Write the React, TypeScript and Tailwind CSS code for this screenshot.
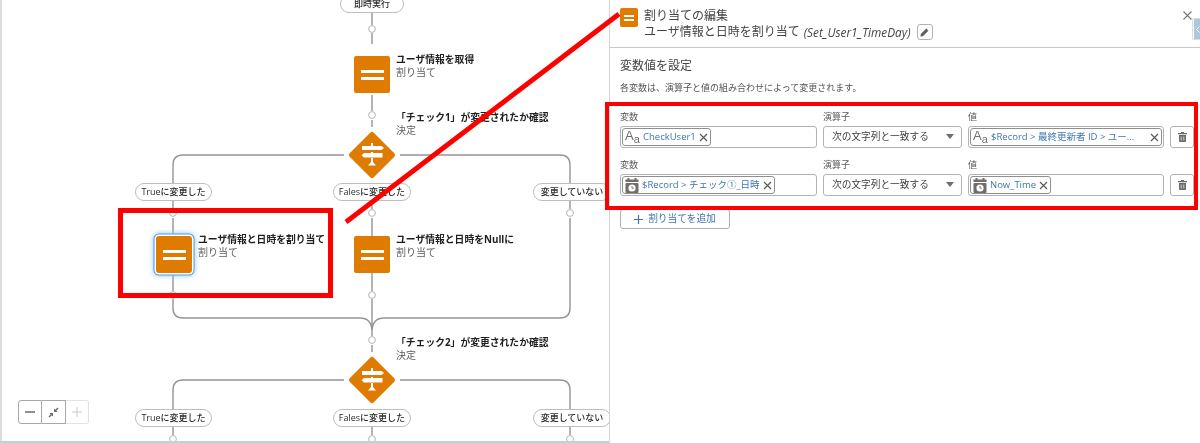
import React from "react";

const FONT = "font-['Open_Sans','Noto_Sans_CJK_JP',sans-serif]";

function Bars({ small }: { small?: boolean }) {
  return (
    <span className={small ? "flex flex-col gap-[2px]" : "flex flex-col gap-[4px]"}>
      <span className={small ? "block w-[10px] h-[2px] bg-white" : "block w-[23px] h-[3px] bg-white"} />
      <span className={small ? "block w-[10px] h-[2px] bg-white" : "block w-[23px] h-[3px] bg-white"} />
    </span>
  );
}

function Diamond({ cy }: { cy: number }) {
  return (
    <g transform={`translate(372 ${cy})`}>
      <rect x="-17" y="-17" width="34" height="34" rx="2.5" fill="#de7b00" transform="rotate(45)" />
      <path
        d="M-1 -12h2v3h8.5l2.5 2-2.5 2H-10v-4H-1zM-1 -2v-1h2v1h9.5v4.5H-8L-10.5 0.2-8-2zM-1 3h2v4l3 3.500h-8l3-3.500z"
        fill="#fff"
      />
    </g>
  );
}

function Connectors() {
  const circles: [number, number][] = [
    [372, 29], [372, 115], [173, 213], [372, 213], [570, 213],
    [173, 295], [372, 295], [372, 340], [173, 439], [372, 439], [570, 439],
  ];
  return (
    <svg className="absolute left-0 top-0" width="609" height="443" viewBox="0 0 609 443" fill="none">
      <g stroke="#959595" strokeWidth="1.4">
        <path d="M372 13V25M372 33V44M372 95V111M372 120V127" />
        <path d="M344 155H183Q173 155 173 165V183M400 155H560Q570 155 570 165V183" />
        <path d="M173 201V209M372 201V209M570 201V209M173 218V234M372 218V236M570 218V308Q570 318 560 318H384Q373 318 372 330" />
        <path d="M173 275V291M372 273V291M173 299V308Q173 318 183 318H360Q371 318 372 330M372 299V336M372 345V352" />
        <path d="M344 380H183Q173 380 173 390V409M400 380H560Q570 380 570 390V409" />
        <path d="M173 427V435M372 427V435M570 427V435" />
      </g>
      <g fill="#fff" stroke="#b5b5b5" strokeWidth="1">
        {circles.map(([x, y]) => (
          <circle key={`${x}-${y}`} cx={x} cy={y} r="3.400" />
        ))}
      </g>
      <Diamond cy={155} />
      <Diamond cy={380} />
    </svg>
  );
}

function Pill({ className, children }: { className: string; children: React.ReactNode }) {
  return (
    <div
      className={`absolute flex items-center justify-center h-[18px] rounded-full border border-[#bdbdbd] bg-white text-[9px] font-medium text-[#2b2b2b] whitespace-nowrap ${className}`}
    >
      {children}
    </div>
  );
}

function NodeLabel({ className, title, sub }: { className: string; title: string; sub: string }) {
  return (
    <div className={`absolute whitespace-nowrap ${className}`}>
      <div className="text-[9.800px] leading-[13px] font-bold text-[#1f1f1f]">{title}</div>
      <div className="text-[10px] leading-[13px] text-[#5c5c5c]">{sub}</div>
    </div>
  );
}

function AaIcon() {
  return (
    <span className="flex items-end w-[15px] h-[16px] text-[#706e6b] font-['Liberation_Sans',sans-serif] leading-none shrink-0">
      <span className="text-[13px] -translate-y-[3px]">A</span>
      <span className="text-[11px]">a</span>
    </span>
  );
}

function CalIcon() {
  return (
    <svg width="14" height="15" viewBox="0 0 14 15" className="shrink-0">
      <rect x="2.500" y="0" width="2" height="3" fill="#706e6b" />
      <rect x="9.500" y="0" width="2" height="3" fill="#706e6b" />
      <rect x="0.500" y="1.500" width="13" height="2.500" fill="#706e6b" />
      <rect x="0.500" y="5" width="13" height="10" rx="1" fill="#706e6b" />
      <circle cx="7" cy="10" r="3.600" fill="#fff" />
      <path d="M7 8v2.200h1.800" stroke="#706e6b" strokeWidth="0.9" fill="none" />
    </svg>
  );
}

function XIcon() {
  return (
    <svg width="9" height="9" viewBox="0 0 9 9" className="shrink-0">
      <path d="M1 1l7 7M8 1L1 8" stroke="#5a5a5a" strokeWidth="1.200" />
    </svg>
  );
}

function Chip({ icon, text, textClass = "" }: { icon: React.ReactNode; text: string; textClass?: string }) {
  return (
    <div className="flex items-center h-[18px] pl-[2px] pr-[2px] gap-[3px] rounded-[3px] border border-[#8f8f8f] bg-white">
      {icon}
      <span className={`text-[9.500px] text-[#3f76ad] whitespace-nowrap ${textClass}`}>{text}</span>
      <XIcon />
    </div>
  );
}

function Field({ label, children }: { label: string; children: React.ReactNode }) {
  return (
    <div>
      <div className="h-[15px] text-[9px] leading-[12px] text-[#5a5a5a]">{label}</div>
      <div className="h-[22px] flex items-center px-[1px] rounded-[3px] border border-[#b3b3b3] bg-white">{children}</div>
    </div>
  );
}

function SelectField() {
  return (
    <Field label="演算子">
      <div className="flex flex-1 items-center justify-between pl-[7px] pr-[6px]">
        <span className="text-[9.700px] text-[#3e3e3c] whitespace-nowrap">次の文字列と一致する</span>
        <svg width="8" height="5" viewBox="0 0 8 5"><path d="M0 0h8L4 5z" fill="#706e6b" /></svg>
      </div>
    </Field>
  );
}

function TrashBtn() {
  return (
    <div className="pt-[15px]">
      <div className="h-[22px] flex items-center justify-center rounded-[3px] border border-[#b3b3b3] bg-white">
        <svg width="9" height="10" viewBox="0 0 9 10">
          <path d="M3 0h3v1h3v1.200H0V1h3zM1 3h7v6.200a.8.8 0 0 1-.8.8H1.800a.8.8 0 0 1-.8-.8z" fill="#6b6b6b" />
          <path d="M3.200 4.500v4M5.800 4.500v4" stroke="#fff" strokeWidth="0.700" />
        </svg>
      </div>
    </div>
  );
}

function Canvas() {
  return (
    <div className="relative w-[609px] h-[443px] shrink-0 border-l-2 border-[#dcdcdc] overflow-hidden">
      <div className="absolute -left-[2px] top-0 w-[609px] h-[443px]">
        <Connectors />
        <Pill className="left-[340px] -top-[5px] w-[64px]">即時実行</Pill>

        <div className="absolute left-[354px] top-[56px] w-[36px] h-[37px] rounded-[2px] bg-[#de7b00] flex items-center justify-center"><Bars /></div>
        <NodeLabel className="left-[396px] top-[53px]" title="ユーザ情報を取得" sub="割り当て" />

        <NodeLabel className="left-[396px] top-[111px]" title="「チェック1」が変更されたか確認" sub="決定" />

        <Pill className="left-[135px] top-[183px] w-[77px]">Trueに変更した</Pill>
        <Pill className="left-[333px] top-[183px] w-[78px]">Falesに変更した</Pill>
        <Pill className="left-[533px] top-[183px] w-[78px]">変更していない</Pill>

        <div className="absolute left-[156px] top-[236px] w-[36px] h-[37px] rounded-[3px] bg-[#de7b00] flex items-center justify-center shadow-[0_0_0_1.500px_#fff,0_0_0_2.500px_#4c9ee8,0_0_5px_3px_#9ccbf5]"><Bars /></div>
        <NodeLabel className="left-[198px] top-[233px]" title="ユーザ情報と日時を割り当て" sub="割り当て" />

        <div className="absolute left-[354px] top-[236px] w-[36px] h-[37px] rounded-[2px] bg-[#de7b00] flex items-center justify-center"><Bars /></div>
        <NodeLabel className="left-[396px] top-[233px]" title="ユーザ情報と日時をNullに" sub="割り当て" />

        <NodeLabel className="left-[396px] top-[336px]" title="「チェック2」が変更されたか確認" sub="決定" />

        <Pill className="left-[135px] top-[409px] w-[77px]">Trueに変更した</Pill>
        <Pill className="left-[333px] top-[409px] w-[78px]">Falesに変更した</Pill>
        <Pill className="left-[533px] top-[409px] w-[78px]">変更していない</Pill>

        <div className="absolute left-[18px] top-[400px] flex h-[24px] w-[71px] rounded-[3px] bg-white">
          <div className="flex flex-1 items-center justify-center rounded-l-[3px] border border-[#a8a8a8]">
            <svg width="10" height="2" viewBox="0 0 10 2"><path d="M0 1h10" stroke="#6b6b6b" strokeWidth="1.500" /></svg>
          </div>
          <div className="flex flex-1 items-center justify-center border-y border-r border-[#a8a8a8]">
            <svg width="11" height="11" viewBox="0 0 11 11">
              <path d="M6 5V1.500L7.200 2.700 9.500 .5l1 1L8.300 3.800 9.500 5zM5 6v3.500L3.800 8.300 1.500 10.500l-1-1L2.700 7.200 1.500 6z" fill="#6b6b6b" />
            </svg>
          </div>
          <div className="flex flex-1 items-center justify-center rounded-r-[3px] border-y border-r border-[#e2e2e2]">
            <svg width="10" height="10" viewBox="0 0 10 10"><path d="M0 5h10M5 0v10" stroke="#c9c9c9" strokeWidth="1" /></svg>
          </div>
        </div>
      </div>
    </div>
  );
}

function Panel() {
  return (
    <div className="relative flex-1 h-[443px] border-l border-[#d4d4d4] bg-white">
      <div className="flex h-[48px] border-b border-[#c9c9c9] pl-[10px] pt-[8px]">
        <div className="w-[18px] h-[19px] rounded-[2px] bg-[#de7b00] flex items-center justify-center"><Bars small /></div>
        <div className="ml-[6px] text-[#444] whitespace-nowrap">
          <div className="text-[12px] leading-[16px]">割り当ての編集</div>
          <div className="flex items-center text-[12px] leading-[16px]">
            <span>ユーザ情報と日時を割り当て</span>
            <span className="ml-[4px] text-[11.800px] italic">(Set_User1_TimeDay)</span>
            <span className="ml-[6px] flex h-[16px] w-[16px] items-center justify-center rounded-[3px] border border-[#b3b3b3]">
              <svg width="9" height="9" viewBox="0 0 9 9"><path d="M6.300.6l2.100 2.100-5.500 5.500L.5 8.500l.3-2.400z" fill="#5f5f5f" /></svg>
            </span>
          </div>
        </div>
      </div>
      <div className="pl-[10px] pr-[7px]">
        <div className="pt-[10px] text-[12px] leading-[16px] text-[#444]">変数値を設定</div>
        <div className="mt-[8px] text-[9px] leading-[12px] text-[#555]">各変数は、演算子と値の組み合わせによって変更されます。</div>
        <div className="mt-[17px] grid grid-cols-[197px_139px_196px_24px] gap-x-[6px] gap-y-[11px]">
          <Field label="変数"><Chip icon={<AaIcon />} text="CheckUser1" /></Field>
          <SelectField />
          <Field label="値"><Chip icon={<AaIcon />} text="$Record > 最終更新者 ID > ユー..." textClass="w-[156px]" /></Field>
          <TrashBtn />
          <Field label="変数"><Chip icon={<CalIcon />} text="$Record > チェック①_日時" /></Field>
          <SelectField />
          <Field label="値"><Chip icon={<CalIcon />} text="Now_Time" /></Field>
          <TrashBtn />
        </div>
        <div className="mt-[13px] flex h-[20px] w-[110px] items-center justify-center gap-[5px] rounded-[3px] border border-[#b3b3b3] bg-white">
          <svg width="9" height="9" viewBox="0 0 9 9"><path d="M0 4.500h9M4.500 0v9" stroke="#3f76ad" strokeWidth="1.200" /></svg>
          <span className="text-[9.700px] text-[#3f76ad]">割り当てを追加</span>
        </div>
      </div>

      <svg width="9" height="9" viewBox="0 0 9 9" className="absolute right-[9px] top-[11px]">
        <path d="M.5.5l8 8M8.500.5l-8 8" stroke="#777" strokeWidth="1.100" />
      </svg>
      <div className="absolute right-0 top-[18px] flex h-[22px] w-[9px] items-center justify-center rounded-l-[2px] border-y border-l border-[#ddd] bg-white pl-[1px]">
        <div className="flex h-[20px] w-[7px] items-center justify-center bg-[#a9c9dc]">
          <svg width="4" height="7" viewBox="0 0 4 7"><path d="M3.500.5L.5 3.500l3 3" stroke="#fff" fill="none" /></svg>
        </div>
      </div>
    </div>
  );
}

export default function App() {
  return (
    <div className={`relative flex w-[1200px] h-[443px] overflow-hidden bg-white blur-[0.3px] ${FONT}`}>
      <Canvas />
      <Panel />
      <div className="absolute left-0 bottom-0 h-[2px] w-[609px] bg-[#c3d0d4]" />
      <div className="absolute left-[118px] top-[208px] h-[90px] w-[215px] border-[5px] border-[#ff0000]" />
      <div className="absolute left-[605px] top-[102px] h-[108px] w-[593px] border-[4px] border-[#ff0000]" />
      <svg className="absolute left-0 top-0 pointer-events-none" width="1200" height="443" viewBox="0 0 1200 443">
        <path d="M346 222L619 14" stroke="#ff0000" strokeWidth="5" />
      </svg>
    </div>
  );
}
